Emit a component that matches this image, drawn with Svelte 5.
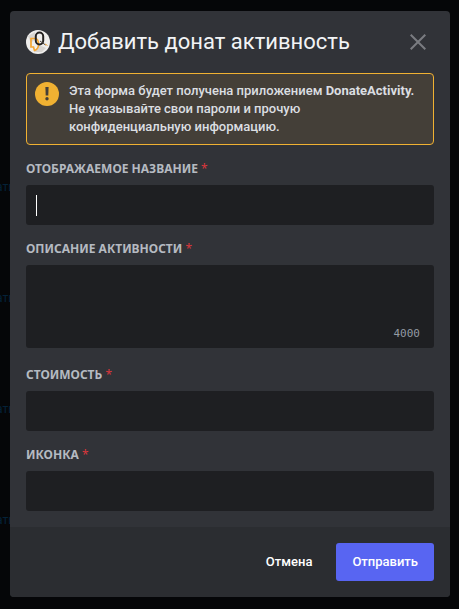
<script>
  import { onMount } from 'svelte';

  const limit = 4000;
  const behind = ['ать', 'ать', 'ать', 'ать'];

  let title = $state('');
  let description = $state('');
  let price = $state('');
  let icon = $state('');
  let first;

  onMount(() => first.focus());
</script>

<div class="backdrop">
  <ul class="behind" aria-hidden="true">
    {#each behind as word}
      <li>{word}</li>
    {/each}
  </ul>

  <form class="modal" onsubmit={(e) => e.preventDefault()}>
    <div class="content">
      <header>
        <svg class="avatar" viewBox="0 0 24 24" aria-hidden="true">
          <circle cx="12" cy="12" r="12" fill="#efeeec" />
          <path d="M2 6 9 2l1 6-5 5zM8 22l5-7 7 3-4 4z" fill="#d8d5d1" />
          <path d="M5 8.500h4c2.500 0 3.500 3 3.500 6s-2 5.500-4 6l-1-3.500H5z" fill="none" stroke="#f5a733" stroke-width="1.700" />
          <rect x="9.800" y="2.500" width="7.400" height="12" rx="3.700" fill="none" stroke="#24211f" stroke-width="2" />
          <path d="m14 11 5.500 4" stroke="#4a4540" stroke-width="1" />
          <path d="m19 14 2.500 1.500" stroke="#e8a13c" stroke-width="1" />
        </svg>
        <h1>Добавить донат активность</h1>
        <button class="close" type="button" aria-label="Закрыть">
          <svg viewBox="0 0 16 16" aria-hidden="true">
            <path d="m.7.7 14.600 14.600M15.300.7.7 15.300" fill="none" stroke="currentColor" stroke-width="2" />
          </svg>
        </button>
      </header>

      <div class="notice" role="note">
        <svg viewBox="0 0 24 24" aria-hidden="true">
          <circle cx="12" cy="12" r="12" fill="#f0b132" />
          <path d="M10.400 5h3.200l-.3 8.500h-2.600z" fill="#443f38" />
          <circle cx="12" cy="16.800" r="1.700" fill="#443f38" />
        </svg>
        <p>Эта форма будет получена приложением <strong>DonateActivity.</strong> Не указывайте свои пароли и прочую конфиденциальную информацию.</p>
      </div>

      <div class="field">
        <label for="title">Отображаемое название <span>*</span></label>
        <div class="control">
          <input id="title" type="text" bind:value={title} bind:this={first} />
          {#if title === ''}
            <span class="caret"></span>
          {/if}
        </div>
      </div>

      <div class="field long">
        <label for="description">Описание активности <span>*</span></label>
        <div class="area">
          <textarea id="description" maxlength={limit} bind:value={description}></textarea>
          <output for="description">{limit - description.length}</output>
        </div>
      </div>

      <div class="field">
        <label for="price">Стоимость <span>*</span></label>
        <input id="price" type="text" bind:value={price} />
      </div>

      <div class="field">
        <label for="icon">Иконка <span>*</span></label>
        <input id="icon" type="text" bind:value={icon} />
      </div>
    </div>

    <footer>
      <button class="cancel" type="button">Отмена</button>
      <button class="submit" type="submit">Отправить</button>
    </footer>
  </form>
</div>

<style>
  :global(body) {
    margin: 0;
    background: #050608;
  }

  .backdrop,
  .backdrop * {
    box-sizing: border-box;
  }

  .backdrop {
    position: relative;
    min-height: 100vh;
    padding: 11px 9px 12px 10px;
    background: #050608;
    font-family: Roboto, "Noto Sans", sans-serif;
    font-size: 13px;
    line-height: 18px;
    overflow: hidden;
  }

  .behind {
    position: absolute;
    top: 178px;
    left: -4px;
    display: flex;
    flex-direction: column;
    gap: 93px;
    margin: 0;
    padding: 0;
    list-style: none;
    color: #042238;
    font-size: 12px;
  }

  .modal {
    position: relative;
    max-width: 440px;
    margin: 0 auto;
    border-radius: 4px;
    background: #313338;
    overflow: hidden;
  }

  .content {
    padding: 16px;
  }

  header {
    display: flex;
    align-items: center;
    gap: 8px;
    height: 30px;
    margin-bottom: 16px;
  }

  .avatar {
    flex: none;
    width: 24px;
    height: 24px;
  }

  h1 {
    flex: 1;
    margin: 0;
    color: #f2f3f5;
    font-size: 22px;
    font-weight: 400;
    line-height: 30px;
  }

  button {
    border: 0;
    font: inherit;
    cursor: pointer;
  }

  .close {
    display: flex;
    padding: 8px;
    background: none;
    color: #7a7c81;
  }

  .close svg {
    width: 16px;
    height: 16px;
  }

  .notice {
    display: flex;
    gap: 10px;
    padding: 8px;
    border: 1px solid #f0b132;
    border-radius: 4px;
    background: #443f38;
    color: #dbdee1;
  }

  .notice svg {
    flex: none;
    width: 24px;
    height: 24px;
  }

  .notice p {
    margin: 0;
    font-weight: 500;
  }

  .notice strong {
    font-weight: 700;
  }

  .field {
    display: flex;
    flex-direction: column;
    gap: 8px;
    margin-top: 16px;
  }

  .long {
    margin-bottom: 19px;
  }

  label {
    color: #b5bac1;
    font-family: "Noto Sans", "Open Sans", sans-serif;
    font-size: 12px;
    font-weight: 700;
    line-height: 16px;
    text-transform: uppercase;
  }

  label span {
    color: #da373c;
    font-weight: 400;
  }

  .control {
    position: relative;
    display: flex;
  }

  .control input {
    caret-color: #fff;
  }

  .caret {
    display: none;
    position: absolute;
    top: 10px;
    left: 10px;
    width: 1px;
    height: 21px;
    background: #fff;
    pointer-events: none;
  }

  .control input:focus + .caret {
    display: block;
  }

  input,
  .area {
    width: 100%;
    border: 0;
    border-radius: 3px;
    background: #1e1f22;
    color: #dbdee1;
  }

  input {
    height: 40px;
    padding: 10px;
    outline: 0;
    font: inherit;
    font-size: 16px;
  }

  .area {
    display: flex;
    flex-direction: column;
    height: 83px;
  }

  textarea {
    flex: 1;
    min-height: 0;
    padding: 10px;
    border: 0;
    outline: 0;
    background: none;
    color: inherit;
    font: inherit;
    resize: none;
  }

  output {
    align-self: flex-end;
    padding: 0 14px 5px;
    color: #949ba4;
    font-family: "DejaVu Sans Mono", "Liberation Mono", monospace;
    font-size: 11px;
  }

  footer {
    display: flex;
    justify-content: flex-end;
    gap: 8px;
    padding: 16px;
    background: #2b2d31;
  }

  footer button {
    height: 38px;
    padding: 0 16px;
    border-radius: 3px;
    background: none;
    color: #fff;
    font-weight: 500;
  }

  footer .submit {
    background: #5865f2;
  }
</style>
